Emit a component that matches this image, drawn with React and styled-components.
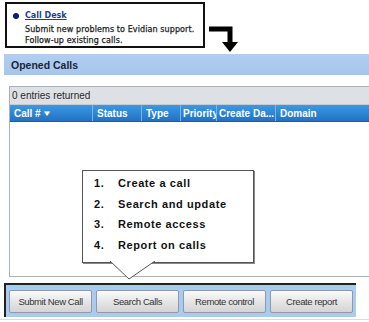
import React from 'react';
import styled, { createGlobalStyle } from 'styled-components';

const GlobalStyle = createGlobalStyle`
  html, body {
    margin: 0;
    padding: 0;
    background: #ffffff;
  }
  body {
    font-family: "Liberation Sans", Arial, sans-serif;
  }
`;

const Page = styled.div`
  position: relative;
  width: 369px;
  height: 322px;
  overflow: hidden;
  background: #fff;
`;

const TopRow = styled.div`
  display: flex;
  align-items: flex-start;
  padding: 2px 0 0 5px;
  height: 52px;
  box-sizing: border-box;
`;

const InfoBox = styled.div`
  width: 200px;
  height: 46px;
  box-sizing: border-box;
  border: 2px solid #111;
  display: flex;
  gap: 6px;
  padding: 6px 0 0 6px;
  font-family: "DejaVu Sans", Verdana, sans-serif;
  flex: none;
`;

const Bullet = styled.span`
  width: 6px;
  height: 6px;
  border-radius: 50%;
  background: #0b1e6e;
  margin-top: 3px;
  flex: none;
`;

const InfoText = styled.div`
  display: flex;
  flex-direction: column;
  gap: 1px;
  white-space: nowrap;
`;

const DeskLink = styled.a`
  font-size: 8px;
  font-weight: bold;
  color: #1b3f99;
  text-decoration: underline;
  line-height: 12px;
  margin-bottom: 2px;
`;

const InfoLine = styled.span`
  font-size: 8px;
  font-weight: normal;
  color: #1e1e1e;
  line-height: 10px;
  letter-spacing: 0.1px;
  -webkit-text-stroke: 0.25px #1e1e1e;
`;

const Arrow = styled.svg`
  margin: 24px 0 0 4px;
  flex: none;
`;

const SectionBar = styled.div`
  margin: 2px 0 0 4px;
  height: 21px;
  background: linear-gradient(#b0cef0, #a5c6ec);
  display: flex;
  align-items: center;
  padding-left: 7px;
  font-size: 10.5px;
  font-weight: bold;
  color: #1b2638;
`;

const TableWrap = styled.div`
  margin: 11px 0 0 9px;
  height: 191px;
  box-sizing: border-box;
  border-left: 1px solid #a8b0bc;
  border-top: 1px solid #a8b0bc;
  border-bottom: 1px solid #a8b0bc;
  display: flex;
  flex-direction: column;
`;

const CountRow = styled.div`
  height: 17px;
  background: #dde0e5;
  display: flex;
  align-items: center;
  padding-left: 2px;
  font-size: 10px;
  color: #2a2a2a;
  border-bottom: 1px solid #c6cbd2;
`;

const HeadRow = styled.div`
  display: flex;
  height: 16px;
  background: linear-gradient(#3e98e0, #1f73c4);
  border-bottom: 1px solid #1a5ea8;
`;

const HeadCell = styled.div`
  width: ${p => p.w}px;
  box-sizing: border-box;
  padding-left: ${p => p.pl ?? 4}px;
  display: flex;
  align-items: center;
  font-size: 10px;
  font-weight: bold;
  color: #fff;
  white-space: nowrap;
  overflow: hidden;
  border-right: ${p => (p.last ? 'none' : '1px solid #7db3e6')};
`;

const Caret = styled.span`
  font-size: 8px;
  margin-left: 2px;
  transform: scaleX(1.3);
`;

const Body = styled.div`
  flex: 1;
  background: #fff;
`;

const Callout = styled.div`
  position: absolute;
  left: 82px;
  top: 170px;
  width: 172px;
  height: 93px;
  box-sizing: border-box;
  border: 1px solid #555;
  background: #fff;
  box-shadow: 1px 1px 0 #888;
  padding: 5px 0 0 11px;
`;

const Pointer = styled.svg`
  position: absolute;
  left: 109px;
  top: 261px;
`;

const StepList = styled.ol`
  margin: 0;
  padding: 0;
  list-style: none;
  display: flex;
  flex-direction: column;
  gap: 6.6px;
`;

const Step = styled.li`
  display: flex;
  font-family: "Liberation Sans", Tahoma, sans-serif;
  font-size: 11px;
  font-weight: bold;
  letter-spacing: 0.6px;
  color: #111;
  line-height: 14px;
`;

const StepNum = styled.span`
  width: 24px;
`;

const ButtonBar = styled.div`
  margin: 6px 0 0 4px;
  width: 352px;
  height: 34px;
  box-sizing: border-box;
  border-left: 2px solid #222;
  border-top: 2px solid #222;
  background: #a9cbee;
  display: flex;
  align-items: center;
  gap: 4px;
  padding: 0 0 0 3px;
`;

const Button = styled.button`
  width: 83px;
  height: 23px;
  border: 1px solid #8e9aab;
  border-radius: 2px;
  background: linear-gradient(#fafafa, #e2e2e2 60%, #d4d4d4);
  font-family: "Liberation Sans", Arial, sans-serif;
  font-size: 9.5px;
  letter-spacing: -0.4px;
  color: #333;
  padding: 0;
`;

const BottomLine = styled.div`
  margin-top: 2px;
  height: 1px;
  background: #d8dde3;
`;

const columns = [
  { label: 'Call #', w: 83, caret: true },
  { label: 'Status', w: 49 },
  { label: 'Type', w: 39 },
  { label: 'Priority', w: 36, pl: 2 },
  { label: 'Create Da...', w: 59, pl: 2 },
  { label: 'Domain', w: 93, last: true },
];

const steps = ['Create a call', 'Search and update', 'Remote access', 'Report on calls'];

const buttons = ['Submit New Call', 'Search Calls', 'Remote control', 'Create report'];

export default function App() {
  return (
    <Page>
      <GlobalStyle />
      <TopRow>
        <InfoBox>
          <Bullet />
          <InfoText>
            <DeskLink href="#">Call Desk</DeskLink>
            <InfoLine>Submit new problems to Evidian support.</InfoLine>
            <InfoLine>Follow-up existing calls.</InfoLine>
          </InfoText>
        </InfoBox>
        <Arrow width="30" height="28" viewBox="0 0 30 28">
          <path d="M0 3 H21 V17" fill="none" stroke="#000" strokeWidth="5" strokeLinejoin="miter" />
          <path d="M13 16 H29 L21 26 Z" fill="#000" />
        </Arrow>
      </TopRow>

      <SectionBar>Opened Calls</SectionBar>

      <TableWrap>
        <CountRow>0 entries returned</CountRow>
        <HeadRow>
          {columns.map(c => (
            <HeadCell key={c.label} w={c.w} pl={c.pl} last={c.last}>
              {c.label}
              {c.caret && <Caret>▼</Caret>}
            </HeadCell>
          ))}
        </HeadRow>
        <Body />
      </TableWrap>

      <ButtonBar>
        {buttons.map(b => (
          <Button key={b}>{b}</Button>
        ))}
      </ButtonBar>
      <BottomLine />

      <Callout>
        <StepList>
          {steps.map((s, i) => (
            <Step key={s}>
              <StepNum>{i + 1}.</StepNum>
              {s}
            </Step>
          ))}
        </StepList>
      </Callout>
      <Pointer width="48" height="20" viewBox="0 0 48 20">
        <path d="M1 0 L20 18 L46 0" fill="#fff" stroke="#555" strokeWidth="1" />
      </Pointer>
    </Page>
  );
}
